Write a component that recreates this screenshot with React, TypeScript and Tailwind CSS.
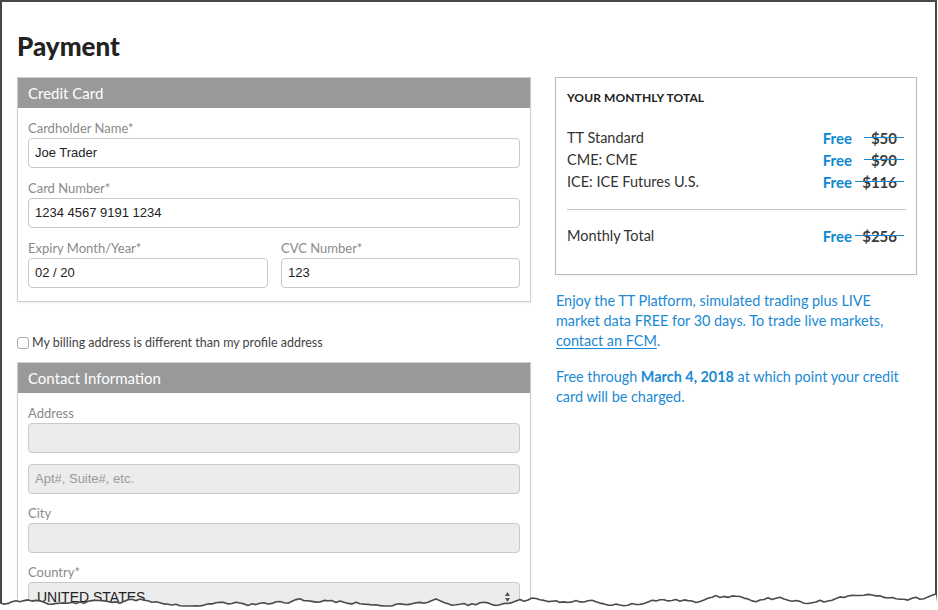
import React from 'react';

const body = "font-['Lato','Noto_Sans',sans-serif]";
const arial = "font-['Liberation_Sans','Arial',sans-serif]";

// jagged "torn paper" edge along the bottom
function tornPoints(): string {
  let seed = 11;
  const rnd = () => {
    seed = (seed * 9301 + 49297) % 233280;
    return seed / 233280;
  };
  const pts: string[] = [];
  let y = 16;
  for (let x = 0; x <= 938; x += 4) {
    y += (rnd() - 0.5) * 4;
    if (y < 8) y = 8;
    if (y > 20) y = 20;
    pts.push(`${x},${y.toFixed(1)}`);
  }
  return pts.join(' ');
}
const TORN = tornPoints();

function Field({ label, value, placeholder, disabled, className = '' }: { label?: string; value?: string; placeholder?: string; disabled?: boolean; className?: string }) {
  return (
    <div className={`flex flex-col ${className}`}>
      {label && <div className="h-[16px] leading-[16px] text-[13px] text-[#8a8a8a] mb-[2px]">{label}</div>}
      <div
        className={`h-[30px] rounded-[4px] border border-[#c9c9c9] flex items-center px-[6px] text-[13px] ${arial} ${disabled ? 'bg-[#ececec] text-[#9a9a9a]' : 'bg-white text-[#222]'}`}
      >
        {value ?? placeholder ?? ''}
      </div>
    </div>
  );
}

function Panel({ title, gap, children }: { title: string; gap: string; children: React.ReactNode }) {
  return (
    <div className="border border-[#cfcfcf] shadow-[0_1px_2px_rgba(0,0,0,0.08)]">
      <div className="h-[30px] bg-[#999999] text-white text-[15px] leading-[30px] px-[10px]">{title}</div>
      <div className={`px-[10px] pt-[12px] pb-[13px] flex flex-col ${gap}`}>{children}</div>
    </div>
  );
}

function Price({ amount }: { amount: string }) {
  return (
    <div className="flex items-center">
      <span className="font-bold text-[15px] text-[#0e88d3]">Free</span>
      <span className="w-[52px] flex justify-end">
        <span className="relative px-[7px] font-bold text-[15px] text-[#3a3a3a]">
          {amount}
          <span className="absolute left-0 right-0 top-[10px] h-[1.5px] bg-[#1a86cc]" />
        </span>
      </span>
    </div>
  );
}

export default function App() {
  const rows = [
    { name: 'TT Standard', amount: '$50' },
    { name: 'CME: CME', amount: '$90' },
    { name: 'ICE: ICE Futures U.S.', amount: '$116' },
  ];

  return (
    <div className={`relative w-[938px] h-[610px] bg-white overflow-hidden ${body}`}>
      <div className="w-[937px] h-[610px] border-x-2 border-t-2 border-[#474747] pl-[15px] pt-[27px]">
        <h1 className="text-[26px] leading-[34px] font-black text-[#222] mb-[14px]">Payment</h1>

        <div className="flex gap-[24px]">
          {/* Left column: form */}
          <div className="w-[514px] flex flex-col">
            <Panel title="Credit Card" gap="gap-[12px]">
              <Field label="Cardholder Name*" value="Joe Trader" />
              <Field label="Card Number*" value="1234 4567 9191 1234" />
              <div className="flex gap-[13px]">
                <Field label="Expiry Month/Year*" value="02 / 20" className="w-[240px]" />
                <Field label="CVC Number*" value="123" className="flex-1" />
              </div>
            </Panel>

            <label className="flex items-center gap-[3px] mt-[31px] mb-[10px] text-[12.5px] leading-[19px] text-[#444]">
              <span className="w-[12px] h-[12px] rounded-[3px] border border-[#aaa] bg-white" />
              My billing address is different than my profile address
            </label>

            <Panel title="Contact Information" gap="gap-[11px]">
              <Field label="Address" disabled />
              <Field placeholder="Apt#, Suite#, etc." disabled />
              <Field label="City" disabled />
              <div className="flex flex-col">
                <div className="h-[16px] leading-[16px] text-[13px] text-[#8a8a8a] mb-[2px]">Country*</div>
                <div className={`h-[30px] rounded-[4px] border border-[#c9c9c9] bg-[#ececec] flex items-center justify-between px-[8px] text-[14px] text-[#222] ${arial}`}>
                  <span>UNITED STATES</span>
                  <svg width="7" height="12" viewBox="0 0 7 12">
                    <path d="M3.5 1 L6 5 L1 5 Z M3.5 11 L6 7 L1 7 Z" fill="#555" />
                  </svg>
                </div>
              </div>
            </Panel>
          </div>

          {/* Right column: summary */}
          <div className="w-[362px] flex flex-col">
            <div className="border border-[#bdbdbd] h-[198px] px-[11px] pt-[12px] shadow-[0_1px_2px_rgba(0,0,0,0.06)]">
              <div className="text-[12px] leading-[16px] font-bold text-[#222] tracking-[0.1px]">YOUR MONTHLY TOTAL</div>
              <div className="mt-[21px] flex flex-col pr-[1px]">
                {rows.map((r) => (
                  <div key={r.name} className="h-[22px] flex items-center justify-between">
                    <span className="text-[14.5px] text-[#333]">{r.name}</span>
                    <Price amount={r.amount} />
                  </div>
                ))}
              </div>
              <div className="mt-[16px] h-px bg-[#c4c4c4] mr-[-1px]" />
              <div className="mt-[15px] h-[22px] flex items-center justify-between pr-[1px]">
                <span className="text-[14.5px] text-[#333]">Monthly Total</span>
                <Price amount="$256" />
              </div>
            </div>

            <p className="mt-[16px] pl-[1px] text-[14.4px] leading-[20px] text-[#1b8ad3]">
              Enjoy the TT Platform, simulated trading plus LIVE<br />
              market data FREE for 30 days. To trade live markets,<br />
              <span className="underline underline-offset-2">contact an FCM</span>.
            </p>
            <p className="mt-[16px] pl-[1px] text-[14.4px] leading-[20px] text-[#1b8ad3]">
              Free through <span className="font-bold">March 4, 2018</span> at which point your credit<br />
              card will be charged.
            </p>
          </div>
        </div>
      </div>

      {/* torn bottom edge */}
      <svg className="absolute left-0 bottom-0" width="938" height="24" viewBox="0 0 938 24">
        <polygon points={`${TORN} 938,24 0,24`} fill="#ffffff" />
        <polyline points={TORN} fill="none" stroke="#4a4a4a" strokeWidth="1.6" strokeLinejoin="round" />
      </svg>
    </div>
  );
}
